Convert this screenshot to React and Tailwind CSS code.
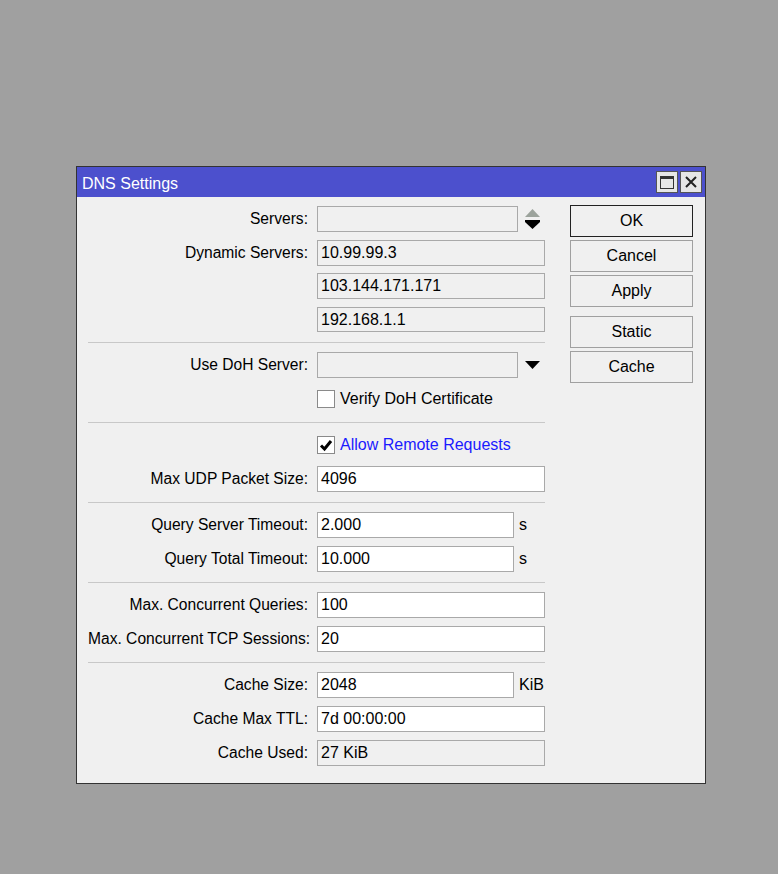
import React from "react";

const font = { fontFamily: '"Liberation Sans", Arial, sans-serif' };

function Sep({ top = "mt-[10px]" }) {
  return <div className={`h-px bg-[#c8c8c8] ${top} mb-[9px] w-[457px]`} />;
}

function Field({ label, value, width = "w-[228px]", white, unit, extra, gap = "mb-[8px]" }) {
  return (
    <div className={`flex items-center h-[26px] ${gap}`}>
      <div className="w-[220px] text-right text-[15.6px] text-black whitespace-nowrap">{label}</div>
      <div className="w-[9px]" />
      <div
        className={`${width} h-[26px] border border-[#a9a9a9] ${white ? "bg-white" : "bg-[#f0f0f0]"} px-[3px] flex items-center text-[16px] text-black`}
      >
        {value}
      </div>
      {unit && <span className="ml-[5px] text-[16px] text-black">{unit}</span>}
      {extra}
    </div>
  );
}

function CheckRow({ label, checked, blue }) {
  return (
    <div className="flex items-center h-[26px] mb-[8px] pl-[229px]">
      <div className="w-[18px] h-[18px] bg-white border border-[#8a8a8a] flex items-center justify-center">
        {checked && (
          <svg width="14" height="14" viewBox="0 0 14 14">
            <path d="M2 7.5 L5.5 11 L12 3" fill="none" stroke="#000" strokeWidth="3" />
          </svg>
        )}
      </div>
      <span className={`ml-[5px] text-[16px] ${blue ? "text-[#1a1aff]" : "text-black"}`}>{label}</span>
    </div>
  );
}

function Btn({ children, focused, className = "" }) {
  return (
    <div
      className={`w-[123px] h-[32px] flex items-center justify-center text-[16px] text-black bg-[#f0f0f0] border ${
        focused ? "border-[#222]" : "border-[#a0a0a0]"
      } ${className}`}
    >
      {children}
    </div>
  );
}

const UpDown = (
  <svg width="17" height="22" viewBox="0 0 17 22" className="ml-[6px]">
    <path d="M8.5 1 L16 9 L1 9 Z" fill="#9ca39c" />
    <rect x="1" y="12" width="15" height="2" fill="#000" />
    <path d="M1 14 L16 14 L8.5 21 Z" fill="#000" />
  </svg>
);

const Down = (
  <svg width="17" height="10" viewBox="0 0 17 10" className="ml-[6px]">
    <path d="M1 1 L16 1 L8.5 9 Z" fill="#000" />
  </svg>
);

export default function App() {
  return (
    <div className="min-h-[874px] w-[778px] bg-[#a0a0a0] pt-[166px] pl-[76px]" style={font}>
      <div className="w-[630px] h-[618px] border border-[#333] bg-[#f0f0f0] flex flex-col">
        {/* Title bar */}
        <div className="h-[30px] bg-[#4c50cd] flex items-center justify-between pl-[5px] pr-[3px]">
          <span className="text-white text-[16px] pt-[3px]">DNS Settings</span>
          <div className="flex gap-[2px]">
            <div className="w-[22px] h-[22px] bg-[#e6e6e6] border border-[#555] flex items-center justify-center">
              <div className="w-[14px] h-[13px] border border-[#333] border-t-[3px]" />
            </div>
            <div className="w-[22px] h-[22px] bg-[#e6e6e6] border border-[#555] flex items-center justify-center">
              <svg width="12" height="12" viewBox="0 0 12 12">
                <path d="M1 1 L11 11 M11 1 L1 11" stroke="#222" strokeWidth="2" />
              </svg>
            </div>
          </div>
        </div>

        {/* Body */}
        <div className="flex pt-[9px] pl-[11px]">
          <div className="flex flex-col">
            <Field label="Servers:" value="" width="w-[201px]" extra={UpDown} />
            <Field label="Dynamic Servers:" value="10.99.99.3" gap="mb-[7px]" />
            <Field label="" value="103.144.171.171" />
            <div className="flex items-center h-[25px]">
              <div className="w-[229px]" />
              <div className="w-[228px] h-[25px] border border-[#a9a9a9] bg-[#f0f0f0] px-[3px] flex items-center text-[16px] text-black">
                192.168.1.1
              </div>
            </div>
            <Sep />
            <Field label="Use DoH Server:" value="" width="w-[201px]" extra={Down} />
            <CheckRow label="Verify DoH Certificate" />
            <div className="-mt-[8px]" />
            <Sep />
            <CheckRow label="Allow Remote Requests" checked blue />
            <div className="flex items-center h-[26px]">
              <div className="w-[220px] text-right text-[15.6px] text-black whitespace-nowrap">Max UDP Packet Size:</div>
              <div className="w-[9px]" />
              <div className="w-[228px] h-[26px] border border-[#a9a9a9] bg-white px-[3px] flex items-center text-[16px] text-black">
                4096
              </div>
            </div>
            <Sep />
            <Field label="Query Server Timeout:" value="2.000" width="w-[197px]" white unit="s" />
            <div className="flex items-center h-[26px]">
              <div className="w-[220px] text-right text-[15.6px] text-black whitespace-nowrap">Query Total Timeout:</div>
              <div className="w-[9px]" />
              <div className="w-[197px] h-[26px] border border-[#a9a9a9] bg-white px-[3px] flex items-center text-[16px] text-black">
                10.000
              </div>
              <span className="ml-[5px] text-[16px] text-black">s</span>
            </div>
            <Sep />
            <Field label="Max. Concurrent Queries:" value="100" white />
            <div className="flex items-center h-[26px]">
              <div className="w-[220px] text-right text-[15.6px] text-black whitespace-nowrap">Max. Concurrent TCP Sessions:</div>
              <div className="w-[9px]" />
              <div className="w-[228px] h-[26px] border border-[#a9a9a9] bg-white px-[3px] flex items-center text-[16px] text-black">
                20
              </div>
            </div>
            <Sep />
            <Field label="Cache Size:" value="2048" width="w-[197px]" white unit="KiB" />
            <Field label="Cache Max TTL:" value="7d 00:00:00" white />
            <Field label="Cache Used:" value="27 KiB" />
          </div>

          <div className="flex flex-col ml-[25px] -mt-[1px] gap-[3px]">
            <Btn focused>OK</Btn>
            <Btn>Cancel</Btn>
            <Btn>Apply</Btn>
            <Btn className="mt-[6px]">Static</Btn>
            <Btn>Cache</Btn>
          </div>
        </div>
      </div>
    </div>
  );
}
